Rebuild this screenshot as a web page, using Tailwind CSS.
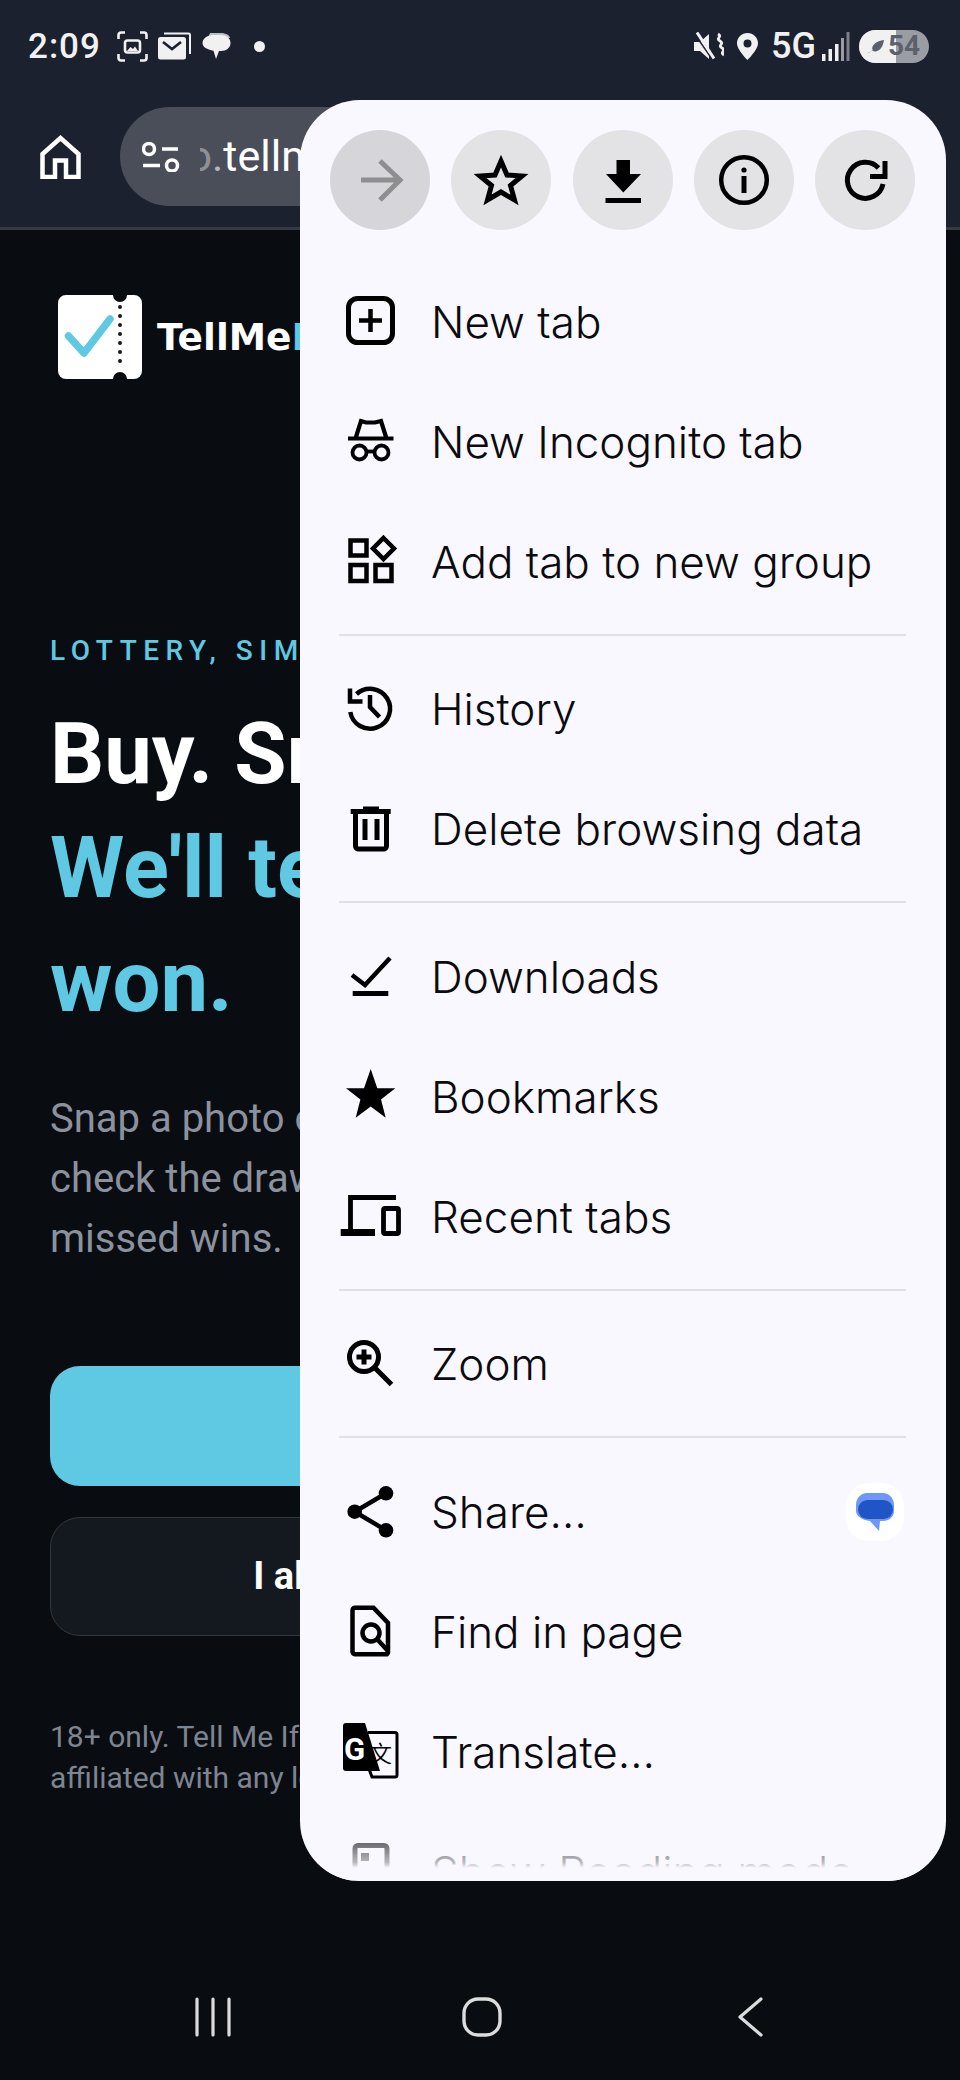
<!DOCTYPE html>
<html lang="en">
<head>
    <meta charset="UTF-8">
    <meta name="viewport" content="width=device-width, initial-scale=1.0">
    <title>Tell Me If I Won</title>
    <script src="https://cdn.jsdelivr.net/npm/@tailwindcss/browser@4"></script>
</head>
<body class="bg-[#090d12]">
<div class="relative w-[960px] h-[2080px] overflow-hidden flex flex-col bg-[#090d12] font-['Roboto',sans-serif]">

    <!-- status bar + toolbar -->
    <header class="h-[230px] shrink-0 bg-[#1c2130] border-b-[3px] border-[#363a45] text-[#f1f1f1]">
        <div class="h-[92px] flex items-center pl-[28px] pr-[31px]">
            <span class="w-[80px] text-[35px] font-medium tracking-[1px] leading-none">2:09</span>
            <svg class="ml-[9px] w-[31px] h-[31px]" viewBox="0 0 31 31" fill="none" stroke="currentColor" stroke-width="2.6">
                <path d="M1.5 8V4a2.5 2.5 0 0 1 2.5-2.5h4M23 1.500h4A2.500 2.500 0 0 1 29.500 4v4M29.500 23v4a2.500 2.500 0 0 1-2.500 2.500h-4M8 29.500H4A2.500 2.500 0 0 1 1.500 27v-4"/>
                <rect x="8" y="9.500" width="15" height="12" rx="2.500"/>
                <path d="M10 20l3.500-4 2.500 2 2-2.500 3 4.500z" fill="currentColor" stroke="none"/>
            </svg>
            <svg class="ml-[10px] w-[33px] h-[28px]" viewBox="0 0 33 28" fill="none">
                <path d="M6 1.500h24.500a1.500 1.500 0 0 1 1.500 1.500v19" stroke="currentColor" stroke-width="2"/>
                <rect y="5" width="28" height="22.500" rx="2.500" fill="currentColor"/>
                <path d="M5 10l9 7 9-7" stroke="#1c2130" stroke-width="2.600"/>
            </svg>
            <svg class="ml-[11px] w-[29px] h-[28px]" viewBox="0 0 29 28">
                <path d="M8 1h11c5 0 9 2.500 9 5H6z" fill="currentColor" opacity=".75"/>
                <path d="M11 3h8c5.500 0 9.500 3.500 9.500 8s-4 8-9.500 8h-2l-3 8-2.500-8.300C5 17.500.500 15 .500 11S5 3 11 3z" fill="currentColor"/>
            </svg>
            <span class="ml-[23px] w-[11px] h-[11px] rounded-full bg-[#f1f1f1]"></span>

            <svg class="ml-auto w-[31px] h-[29px]" viewBox="0 0 31 29" fill="none">
                <path d="M1 10h6l9-8v25l-9-8H1z" fill="currentColor"/>
                <path d="M1 1l18 26" stroke="#1c2130" stroke-width="1.500"/>
                <path d="M4 .500l17 26" stroke="currentColor" stroke-width="3"/>
                <path d="M25 2c5 3-3 4 2 7s-3 4 2 7-3 4 2 7" stroke="currentColor" stroke-width="2.800"/>
            </svg>
            <svg class="ml-[13px] w-[21px] h-[27px]" viewBox="0 0 21 27">
                <path fill-rule="evenodd" d="M10.500 0C4.700 0 0 4.500 0 10.300 0 17 10.500 27 10.500 27S21 17 21 10.300C21 4.500 16.300 0 10.500 0zm0 6.500a4 4 0 1 1 0 8 4 4 0 0 1 0-8z" fill="currentColor"/>
            </svg>
            <span class="ml-[13px] text-[36px] font-medium leading-none">5G</span>
            <svg class="ml-[5px] w-[29px] h-[29px]" viewBox="0 0 29 29">
                <rect x="1" y="22" width="3.500" height="7" fill="currentColor"/>
                <rect x="7.500" y="17" width="3.500" height="12" fill="currentColor"/>
                <rect x="14" y="12" width="3.500" height="17" fill="currentColor"/>
                <rect x="20" y="6" width="3" height="23" fill="#9a9ca4"/>
                <rect x="25.500" y="0" width="3" height="29" fill="#7d808a"/>
            </svg>
            <div class="relative ml-[9px] w-[70px] h-[33px] rounded-full overflow-hidden flex items-center bg-[#9b9da5]">
                <div class="absolute left-0 top-0 h-full w-[37px] bg-[#f1f1f1]"></div>
                <svg class="relative ml-[8px] w-[17px] h-[15px]" viewBox="0 0 17 15">
                    <path d="M0 14.500c3-1 4.500-2.500 5.500-3.500-1.500-5 4-9 11.500-10-1 6-3.500 11-8.500 11.500-1 0-2.500-.5-3-1z" fill="#5c606b"/>
                </svg>
                <span class="relative ml-[4px] text-[28px] font-bold text-[#5c606b] leading-none">54</span>
            </div>
        </div>
        <div class="h-[135px] flex items-start pl-[40px]">
            <svg class="mt-[43px] w-[41px] h-[44px]" viewBox="0 0 41 44" fill="none" stroke="white" stroke-width="4.500">
                <path d="M2.500 42V19L20.500 3l18 16v23H26V25.500H15V42z"/>
            </svg>
            <div class="ml-[39px] mt-[15px] w-[500px] h-[99px] rounded-full bg-[#4a4e58] flex items-center pl-[22px] text-white">
                <svg class="w-[38px] h-[30px]" viewBox="0 0 38 30" fill="none" stroke="white" stroke-width="3.500">
                    <circle cx="7" cy="7" r="5.500"/>
                    <path d="M20 7h16M1 23.500h17"/>
                    <circle cx="30" cy="23.500" r="5.500"/>
                </svg>
                <span class="ml-[20px] w-[12px] overflow-hidden flex justify-end text-[43px] text-white/40 leading-none">o</span>
                <span class="text-[43px] leading-none text-white/60">.</span>
                <span class="text-[43px] leading-none">tellmeifiwon.com</span>
            </div>
        </div>
    </header>

    <!-- page behind the menu -->
    <main class="flex-1 px-[50px]">
        <div class="mt-[65px] ml-[8px] flex items-center">
            <svg class="w-[84px] h-[84px]" viewBox="0 0 84 84">
                <path d="M8 0h47a7 7 0 0 0 14 0h7a8 8 0 0 1 8 8v68a8 8 0 0 1-8 8h-7a7 7 0 0 0-14 0H8a8 8 0 0 1-8-8V8a8 8 0 0 1 8-8z" fill="white"/>
                <path d="M10.500 41L26 58 52 24" fill="none" stroke="#5fc8e3" stroke-width="7.500" stroke-linecap="round" stroke-linejoin="round"/>
                <path d="M62 12v62" fill="none" stroke="#15181d" stroke-width="4" stroke-linecap="round" stroke-dasharray="0 9"/>
            </svg>
            <span class="ml-[15px] text-[37.500px] font-bold font-['DejaVu_Sans',sans-serif] text-white">TellMe<span class="text-[#5fc8e3]">IfIWon</span></span>
        </div>
        <p class="mt-[258px] text-[28px] font-medium tracking-[6.500px] leading-none text-[#5fc8e3] whitespace-nowrap">LOTTERY, SIMPLIFIED</p>
        <h1 class="mt-[32px] text-[85px] font-bold leading-[114px] text-white whitespace-nowrap">Buy. Snap.<br><span class="text-[#5fc8e3]">We'll tell you if you<br>won.</span></h1>
        <p class="mt-[50px] text-[40px] leading-[60px] text-[#8b929e] whitespace-nowrap">Snap a photo of your ticket. We'll<br>check the draw and flag any<br>missed wins.</p>
        <div class="mt-[97px] w-[860px] h-[120px] rounded-[30px] bg-[#5fc8e3]"></div>
        <div class="mt-[31px] w-[860px] h-[119px] pr-[20px] rounded-[30px] bg-[#14181f] border border-[#33373e] flex items-center justify-center text-[38px] font-bold text-white whitespace-nowrap">I already have an account</div>
        <p class="mt-[80px] text-[30px] leading-[41px] text-[#7f8590] whitespace-nowrap">18+ only. Tell Me If I Won is not<br>affiliated with any lottery operator.</p>
    </main>

    <!-- android nav -->
    <nav class="h-[106px] shrink-0 flex items-start pt-[23px] pl-[195px] text-[#dcdcdc]">
        <svg class="w-[36px] h-[40px]" viewBox="0 0 36 40" fill="none" stroke="currentColor" stroke-width="3.200" stroke-linecap="round">
            <path d="M2 2v36M18 2v36M34 2v36"/>
        </svg>
        <svg class="ml-[231px] w-[40px] h-[40px]" viewBox="0 0 40 40" fill="none" stroke="currentColor" stroke-width="3.400">
            <rect x="2" y="2" width="36" height="36" rx="14"/>
        </svg>
        <svg class="ml-[236px] w-[25px] h-[40px]" viewBox="0 0 25 40" fill="none" stroke="currentColor" stroke-width="3.200" stroke-linecap="round" stroke-linejoin="round">
            <path d="M23 2L2 20l21 18"/>
        </svg>
    </nav>

    <!-- overflow menu -->
    <div class="absolute left-[300px] top-[100px] w-[646px] h-[1781px] rounded-[60px] bg-[#f9f7ff] overflow-hidden text-[#0b0b0d] font-['Inter',sans-serif]">
        <div class="h-[162px] pt-[30px] px-[30px] flex gap-[21.250px]">
            <div class="w-[100px] h-[100px] rounded-full bg-[#d6d5d9]">
                <svg viewBox="0 0 100 100" fill="none" stroke="#8e8e91" stroke-width="5">
                    <path d="M31 50h38M50 31l20 19-20 20"/>
                </svg>
            </div>
            <div class="w-[100px] h-[100px] rounded-full bg-[#e3e3e6]">
                <svg viewBox="0 0 100 100" fill="none" stroke="black" stroke-width="5" stroke-linejoin="miter">
                    <path d="M50 31l6 14 15 1-11.500 9.500 4 14.500-13.500-8-13.500 8 4-14.500L29 46l15-1z"/>
                </svg>
            </div>
            <div class="w-[100px] h-[100px] rounded-full bg-[#e3e3e6]">
                <svg viewBox="0 0 100 100" fill="black">
                    <path d="M43.500 30h13.500v14h11L50.300 62.500 33 44h10.500z"/>
                    <rect x="32.500" y="68" width="35.500" height="5"/>
                </svg>
            </div>
            <div class="w-[100px] h-[100px] rounded-full bg-[#e3e3e6]">
                <svg viewBox="0 0 100 100" fill="none" stroke="black" stroke-width="4.500">
                    <circle cx="50" cy="50" r="22.800"/>
                    <circle cx="50" cy="40" r="2.600" fill="black" stroke="none"/>
                    <path d="M50 46v17" stroke-width="5"/>
                </svg>
            </div>
            <div class="w-[100px] h-[100px] rounded-full bg-[#e3e3e6]">
                <svg viewBox="0 0 100 100" fill="none" stroke="black" stroke-width="5">
                    <path d="M63.500 38A18 18 0 1 0 68 54"/>
                    <path d="M70 31v15.500H55"/>
                </svg>
            </div>
        </div>

        <div class="h-[120px] pl-[41px] flex items-center gap-[30px] text-[44px] font-[350] leading-none whitespace-nowrap">
            <svg class="w-[60px] h-[60px] shrink-0 overflow-visible" viewBox="0 0 60 60" fill="none" stroke="black" stroke-width="5">
                <rect x="7.500" y="6.500" width="44" height="44" rx="9"/>
                <path d="M29.500 17v23M18 28.500h23" stroke-width="4.500"/>
            </svg>
            New tab
        </div>
        <div class="h-[120px] pl-[41px] flex items-center gap-[30px] text-[44px] font-[350] leading-none whitespace-nowrap">
            <svg class="w-[60px] h-[60px] shrink-0 overflow-visible" viewBox="0 0 60 60" fill="none" stroke="black" stroke-width="3.800">
                <path d="M7 26.500h45.500M14.500 26.500L20 9l5 1.500h9L40 9l5.500 17.500" stroke-width="4.200"/>
                <circle cx="18.500" cy="40.500" r="7"/>
                <circle cx="40.500" cy="40.500" r="7"/>
                <path d="M25.500 39.500h8"/>
            </svg>
            New Incognito tab
        </div>
        <div class="h-[120px] pl-[41px] flex items-center gap-[30px] text-[44px] font-[350] leading-none whitespace-nowrap">
            <svg class="w-[60px] h-[60px] shrink-0 overflow-visible" viewBox="0 0 60 60" fill="none" stroke="black" stroke-width="4.500">
                <rect x="9.500" y="8.500" width="16" height="15"/>
                <rect x="9.500" y="33" width="16" height="16"/>
                <rect x="34.500" y="33" width="16" height="16"/>
                <path d="M42.500 6l10.500 10.500-10.500 10.500L32 16.500z"/>
            </svg>
            Add tab to new group
        </div>
        <div class="mt-[12px] mb-[13px] ml-[39px] mr-[40px] h-[2px] bg-[#e1e0e6]"></div>

        <div class="h-[120px] pl-[41px] flex items-center gap-[30px] text-[44px] font-[350] leading-none whitespace-nowrap">
            <svg class="w-[60px] h-[60px] shrink-0 overflow-visible" viewBox="0 0 60 60" fill="none" stroke="black" stroke-width="4.500">
                <path d="M15.500 15A20 20 0 1 1 9.300 33"/>
                <path d="M9 9.500v13h12.500"/>
                <path d="M29 16v12l9.500 10"/>
            </svg>
            History
        </div>
        <div class="h-[120px] pl-[41px] flex items-center gap-[30px] text-[44px] font-[350] leading-none whitespace-nowrap">
            <svg class="w-[60px] h-[60px] shrink-0 overflow-visible" viewBox="0 0 60 60" fill="none" stroke="black" stroke-width="5">
                <path d="M9.700 12.500h40M22 10h16" />
                <path d="M14.500 13v34a3 3 0 0 0 3 3h25a3 3 0 0 0 3-3V13"/>
                <path d="M24 20v21M36 20v21"/>
            </svg>
            Delete browsing data
        </div>
        <div class="mt-[12px] mb-[14px] ml-[39px] mr-[40px] h-[2px] bg-[#e1e0e6]"></div>

        <div class="h-[120px] pl-[41px] flex items-center gap-[30px] text-[44px] font-[350] leading-none whitespace-nowrap">
            <svg class="w-[60px] h-[60px] shrink-0 overflow-visible" viewBox="0 0 60 60" fill="none" stroke="black" stroke-width="4.500">
                <path d="M11 28l13 10 25-27"/>
                <path d="M11.700 46.500h35.600" stroke-width="5"/>
            </svg>
            Downloads
        </div>
        <div class="h-[120px] pl-[41px] flex items-center gap-[30px] text-[44px] font-[350] leading-none whitespace-nowrap">
            <svg class="w-[60px] h-[60px] shrink-0 overflow-visible" viewBox="0 0 60 60">
                <path d="M29.700 2l6.600 19.300h18L40 32.500l4.700 18.200-15-11.200-15 11.200 4.700-18.200L5 21.300h18z" fill="black"/>
            </svg>
            Bookmarks
        </div>
        <div class="h-[120px] pl-[41px] flex items-center gap-[30px] text-[44px] font-[350] leading-none whitespace-nowrap">
            <svg class="w-[60px] h-[60px] shrink-0 overflow-visible" viewBox="0 0 60 60" fill="none" stroke="black" stroke-width="4.800">
                <path d="M55 10.500H9.500V44"/>
                <path d="M-.3 45.500H34" stroke-width="7"/>
                <rect x="42.500" y="21.500" width="15" height="25" rx="1.500"/>
            </svg>
            Recent tabs
        </div>
        <div class="mt-[12px] mb-[13px] ml-[39px] mr-[40px] h-[2px] bg-[#e1e0e6]"></div>

        <div class="h-[120px] pl-[41px] flex items-center gap-[30px] text-[44px] font-[350] leading-none whitespace-nowrap">
            <svg class="w-[60px] h-[60px] shrink-0 overflow-visible" viewBox="0 0 60 60" fill="none" stroke="black" stroke-width="5">
                <circle cx="23" cy="23" r="14.500"/>
                <path d="M33.500 33.500L50.500 50.500"/>
                <path d="M23 15.500v15M15.500 23h15"/>
            </svg>
            Zoom
        </div>
        <div class="mt-[12px] mb-[14px] ml-[39px] mr-[40px] h-[2px] bg-[#e1e0e6]"></div>

        <div class="h-[120px] pl-[41px] flex items-center gap-[30px] text-[44px] font-[350] leading-none whitespace-nowrap">
            <svg class="w-[60px] h-[60px] shrink-0 overflow-visible" viewBox="0 0 60 60" fill="black">
                <path d="M45 11.300L13.700 29.700 45 48.300" fill="none" stroke="black" stroke-width="4.500"/>
                <circle cx="45" cy="11.300" r="7.300"/>
                <circle cx="13.700" cy="29.700" r="7.300"/>
                <circle cx="45" cy="48.300" r="7.300"/>
            </svg>
            Share…
            <div class="ml-auto mr-[42px] w-[58px] h-[58px] rounded-[22px] bg-white flex items-center justify-center">
                <svg class="w-[40px] h-[40px]" viewBox="0 0 40 40">
                    <path d="M12 1h16c6 0 11 5 11 12v6c0 6-5 10-11 10h-3l-1 10-9-10C7 28 1 24 1 19v-6C1 6 6 1 12 1z" fill="#6f97f5"/>
                    <rect x="3" y="8" width="35" height="19" rx="9.500" fill="#1f55c4"/>
                </svg>
            </div>
        </div>
        <div class="h-[120px] pl-[41px] flex items-center gap-[30px] text-[44px] font-[350] leading-none whitespace-nowrap">
            <svg class="w-[60px] h-[60px] shrink-0 overflow-visible" viewBox="0 0 60 60" fill="none" stroke="black" stroke-width="4.500">
                <path d="M32.500 5.700H14a3 3 0 0 0-2.500 3v40.500a3 3 0 0 0 2.500 3h32a2 2 0 0 0 1-2V21z"/>
                <circle cx="30" cy="31" r="8.500"/>
                <path d="M36 37l11 12"/>
            </svg>
            Find in page
        </div>
        <div class="h-[120px] pl-[41px] flex items-center gap-[30px] text-[44px] font-[350] leading-none whitespace-nowrap">
            <svg class="w-[60px] h-[60px] shrink-0 overflow-visible" viewBox="0 0 60 60">
                <path d="M27 10.500h27a2 2 0 0 1 2 2V53a2 2 0 0 1-2 2H31l-3-8" fill="none" stroke="black" stroke-width="3"/>
                <path d="M5 1h19l15 48H5a3 3 0 0 1-3-3V4a3 3 0 0 1 3-3z" fill="black"/>
                <text x="3" y="38" font-family="Roboto, sans-serif" font-weight="700" font-size="31" fill="white">G</text>
                <text x="28" y="40" font-family="Noto Sans CJK SC, sans-serif" font-size="23" fill="black">文</text>
            </svg>
            Translate…
        </div>
        <div class="h-[120px] pl-[41px] flex items-center gap-[30px] text-[44px] font-[350] leading-none whitespace-nowrap">
            <svg class="w-[60px] h-[60px] shrink-0 overflow-visible" viewBox="0 0 60 60" fill="none" stroke="black" stroke-width="5">
                <rect x="14" y="3.500" width="32" height="50" rx="3"/>
                <rect x="20" y="11" width="8" height="8" fill="black" stroke="none"/>
            </svg>
            Show Reading mode
        </div>
        <div class="absolute left-0 bottom-0 w-full h-[52px] bg-gradient-to-b from-[#f9f7ff]/20 via-[#f9f7ff]/75 via-65% to-[#f9f7ff] to-75%"></div>
    </div>
</div>
</body>
</html>
